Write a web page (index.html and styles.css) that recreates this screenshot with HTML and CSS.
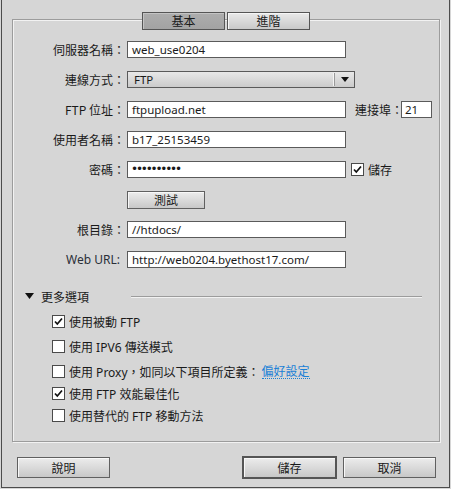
FILE: index.html
```html
<!DOCTYPE html>
<html lang="zh-Hant">
<head>
<meta charset="utf-8">
<title>網站設定</title>
<link rel="stylesheet" href="styles.css">
</head>
<body>
<div class="window">
  <div class="tabs">
    <div class="tab active">基本</div>
    <div class="tab">進階</div>
  </div>
  <div class="panel">
    <div class="form">
      <div class="lbl">伺服器名稱：</div>
      <div class="field"><div class="input w-main">web_use0204</div></div>

      <div class="lbl">連線方式：</div>
      <div class="field">
        <div class="select"><span class="sel-text">FTP</span><span class="sel-sep"></span><svg class="sel-arrow" width="8" height="5" viewBox="0 0 8 5"><polygon points="0,0 8,0 4,5" fill="#111"/></svg></div>
      </div>

      <div class="lbl">FTP 位址：</div>
      <div class="field">
        <div class="input w-main">ftpupload.net</div>
        <span class="port-lbl">連接埠：</span>
        <div class="input w-port">21</div>
      </div>

      <div class="lbl">使用者名稱：</div>
      <div class="field"><div class="input w-main">b17_25153459</div></div>

      <div class="lbl">密碼：</div>
      <div class="field">
        <div class="input w-main dots">••••••••••</div>
        <span class="cb checked"><svg width="11" height="11" viewBox="0 0 11 11"><path d="M2 5.5 L4.3 8 L9 2.5" fill="none" stroke="#111" stroke-width="1.7"/></svg></span>
        <span class="cb-text">儲存</span>
      </div>

      <div class="lbl"></div>
      <div class="field"><div class="btn btn-test">測試</div></div>

      <div class="lbl">根目錄：</div>
      <div class="field"><div class="input w-main">//htdocs/</div></div>

      <div class="lbl lbl-ascii">Web URL:</div>
      <div class="field"><div class="input w-main">http://web0204.byethost17.com/</div></div>
    </div>

    <div class="more">
      <svg class="tri" width="9" height="6" viewBox="0 0 9 6"><polygon points="0,0 9,0 4.5,6" fill="#111"/></svg>
      <span class="more-text">更多選項</span>
      <span class="more-line"></span>
    </div>

    <div class="opts">
      <div class="opt">
        <span class="cb checked"><svg width="11" height="11" viewBox="0 0 11 11"><path d="M2 5.5 L4.3 8 L9 2.5" fill="none" stroke="#111" stroke-width="1.7"/></svg></span>
        <span>使用被動 FTP</span>
      </div>
      <div class="opt">
        <span class="cb"></span>
        <span>使用 IPV6 傳送模式</span>
      </div>
      <div class="opt">
        <span class="cb"></span>
        <span>使用 Proxy，如同以下項目所定義：</span>
        <span class="link">偏好設定</span>
      </div>
      <div class="opt tight">
        <span class="cb checked"><svg width="11" height="11" viewBox="0 0 11 11"><path d="M2 5.5 L4.3 8 L9 2.5" fill="none" stroke="#111" stroke-width="1.7"/></svg></span>
        <span>使用 FTP 效能最佳化</span>
      </div>
      <div class="opt tight">
        <span class="cb"></span>
        <span>使用替代的 FTP 移動方法</span>
      </div>
    </div>
  </div>

  <div class="footer">
    <div class="btn btn-foot">說明</div>
    <div class="footer-right">
      <div class="btn btn-foot btn-default">儲存</div>
      <div class="btn btn-foot">取消</div>
    </div>
  </div>
</div>
</body>
</html>
```

FILE: styles.css
```css
html, body {
  margin: 0;
  padding: 0;
  background: #d6d6d6;
}

body {
  font-family: "Noto Sans", "Noto Sans CJK TC", sans-serif;
  font-size: 12px;
  color: #1a1a1a;
}

.window {
  box-sizing: border-box;
  margin: 0 1px;
  width: 449px;
  height: 488px;
  border: 1px solid #4c4c4c;
  border-top: none;
  padding: 12px 10px 0 10px;
}

.tabs {
  display: flex;
  gap: 2px;
  margin-left: 130px;
  position: relative;
  z-index: 1;
}

.tab {
  box-sizing: border-box;
  width: 83px;
  height: 18px;
  border: 1px solid #555;
  background: linear-gradient(#e9e9e9, #c9c9c9);
  box-shadow: inset 1px 1px 0 #f6f6f6;
  display: flex;
  align-items: center;
  justify-content: center;
  line-height: 1;
  font-family: "Noto Sans CJK TC", sans-serif;
}

.tab.active {
  background: linear-gradient(#adadad, #a3a3a3);
  box-shadow: inset 1px 1px 0 #c4c4c4;
}

.panel {
  box-sizing: border-box;
  margin-top: -11px;
  width: 428px;
  height: 423px;
  border: 1px solid #9c9c9c;
  box-shadow: inset 1px 1px 0 #f2f2f2, 1px 1px 0 #f2f2f2;
  padding-top: 21px;
}

.form {
  display: grid;
  grid-template-columns: 112px 1fr;
  column-gap: 2px;
  row-gap: 13px;
  grid-auto-rows: 17px;
  align-items: center;
}

.lbl {
  text-align: right;
  white-space: nowrap;
  line-height: 17px;
  font-family: "Noto Sans CJK TC", sans-serif;
}

.lbl-ascii {
  font-family: "Noto Sans", sans-serif;
  padding-right: 5px;
  color: #2a2f38;
}

.field {
  display: flex;
  align-items: center;
  height: 17px;
}

.input {
  box-sizing: border-box;
  height: 17px;
  border: 1px solid #5a5a5a;
  background: #fff;
  padding: 0 4px;
  line-height: 15px;
  font-size: 11.5px;
  white-space: nowrap;
  overflow: hidden;
}

.w-main { width: 219px; }
.w-port { width: 31px; padding: 0 3px; }

.dots {
  font-family: "DejaVu Sans", sans-serif;
  font-size: 12px;
  letter-spacing: -2.2px;
  padding-left: 3px;
}

.port-lbl {
  margin-left: 9px;
  margin-right: -2px;
  font-family: "Noto Sans CJK TC", sans-serif;
}

.select {
  box-sizing: border-box;
  width: 228px;
  height: 17px;
  border: 1px solid #5a5a5a;
  background: linear-gradient(#e8e8e8, #cbcbcb);
  display: flex;
  align-items: center;
  padding-left: 6px;
}

.sel-text { flex: 1; line-height: 15px; font-size: 11.5px; }

.sel-sep {
  width: 1px;
  height: 13px;
  background: #9a9a9a;
  border-left: 1px solid #f4f4f4;
  margin-right: 6px;
}

.sel-arrow { margin-right: 5px; }

.cb {
  box-sizing: border-box;
  width: 13px;
  height: 13px;
  border: 1px solid #4a4a4a;
  background: #fff;
  display: inline-flex;
  align-items: center;
  justify-content: center;
  flex: none;
}

.field .cb { margin-left: 5px; }

.cb-text {
  margin-left: 4px;
  font-family: "Noto Sans CJK TC", sans-serif;
}

.btn {
  box-sizing: border-box;
  border: 1px solid #606060;
  background: linear-gradient(#ececec, #c8c8c8);
  box-shadow: inset 1px 1px 0 #f8f8f8;
  display: flex;
  align-items: center;
  justify-content: center;
  font-family: "Noto Sans CJK TC", sans-serif;
  line-height: 1;
}

.btn-test {
  width: 78px;
  height: 18px;
}

.more {
  display: flex;
  align-items: center;
  margin-top: 21px;
  padding-left: 12px;
  height: 14px;
}

.tri { flex: none; }

.more-text {
  margin-left: 7px;
  font-family: "Noto Sans CJK TC", sans-serif;
}

.more-line {
  flex: 1;
  height: 1px;
  background: #9c9c9c;
  border-bottom: 1px solid #f2f2f2;
  margin-left: 42px;
  margin-right: 17px;
  margin-top: 2px;
}

.opts {
  padding-left: 39px;
  margin-top: 12px;
}

.opt {
  display: flex;
  align-items: center;
  height: 13px;
  margin-top: 12px;
  white-space: nowrap;
}

.opt:first-child { margin-top: 0; }
.opt.tight { margin-top: 9px; }

.opt .cb { margin-right: 4px; }

.link {
  color: #1a80d6;
  border-bottom: 1px dotted #1a80d6;
  line-height: 13px;
  margin-left: 2px;
}

.footer {
  display: flex;
  align-items: center;
  margin-top: 15px;
  padding: 0 3px 0 5px;
}

.footer-right {
  margin-left: auto;
  display: flex;
  gap: 6px;
}

.btn-foot {
  width: 93px;
  height: 21px;
}

.btn-default {
  width: 95px;
  height: 23px;
  border: 2px solid #555;
  margin-top: -1px;
  margin-bottom: -1px;
}
```
